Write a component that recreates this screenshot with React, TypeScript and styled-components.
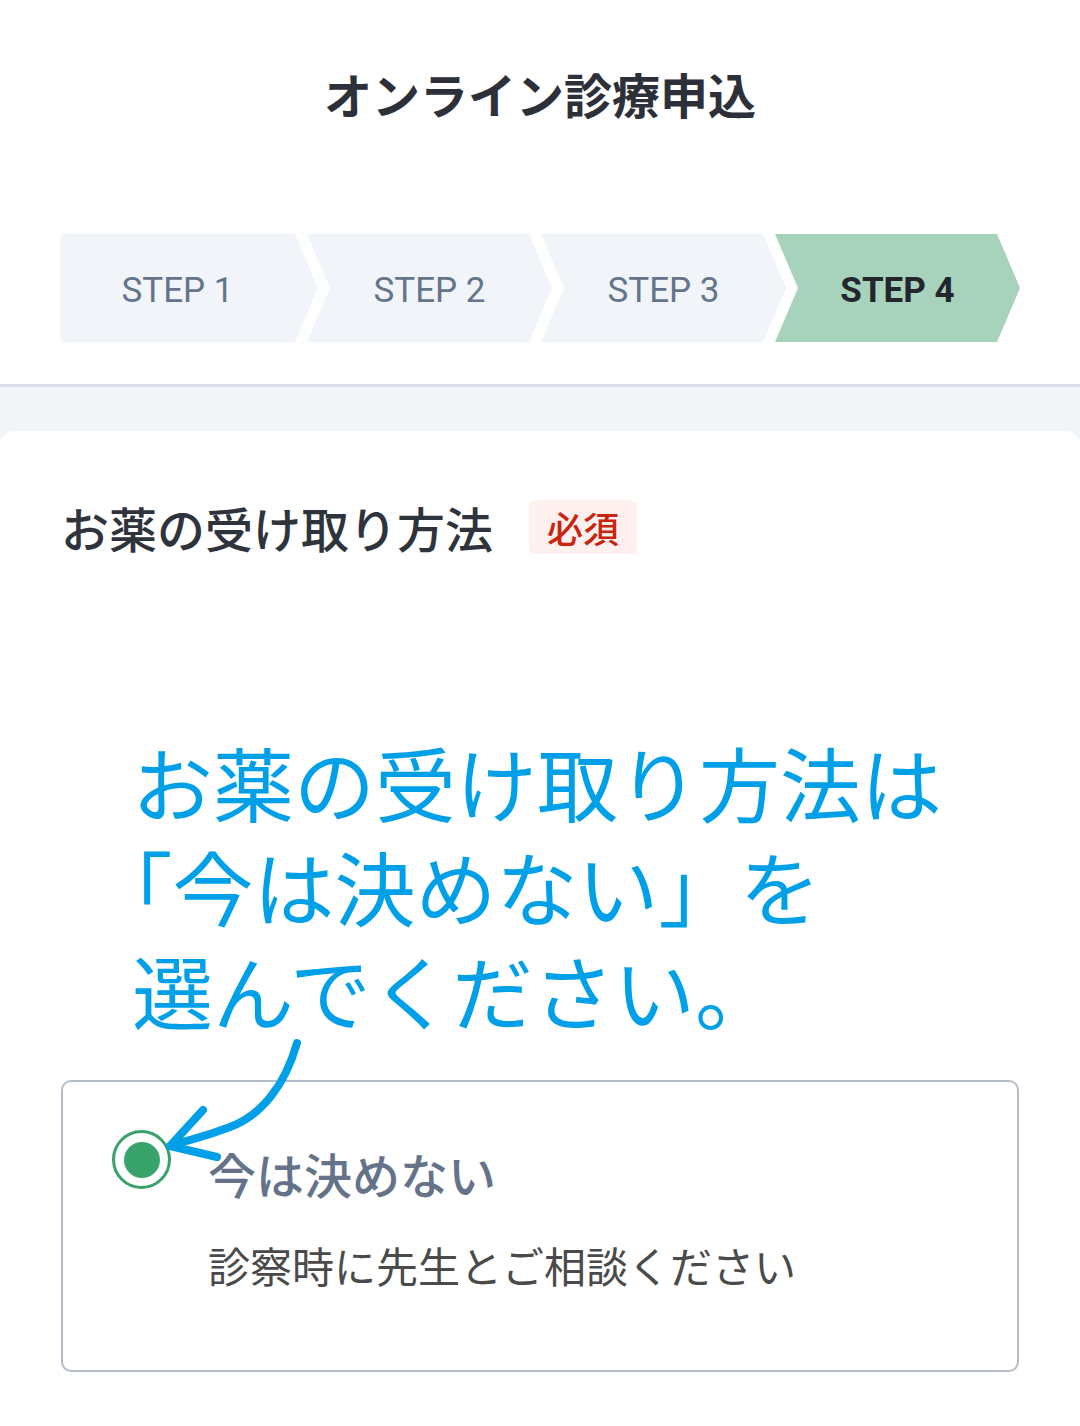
import styled, { createGlobalStyle } from 'styled-components';

const GlobalStyle = createGlobalStyle`
	html, body {
		margin: 0;
		padding: 0;
		background: #f2f5f8;
	}

	body {
		font-family: 'Noto Sans CJK JP', 'Noto Sans', sans-serif;
	}

	* {
		box-sizing: border-box;
	}
`;

const steps = ['STEP 1', 'STEP 2', 'STEP 3', 'STEP 4'];
const currentStep = 3;

const App = () => {
	return (
		<Page>
			<GlobalStyle />
			<Header>
				<Title>オンライン診療申込</Title>
				<Stepper>
					{steps.map((label, i) => (
						<Step key={label} $first={i === 0} $active={i === currentStep}>
							{label}
						</Step>
					))}
				</Stepper>
			</Header>

			<Card>
				<HeadingRow>
					<Heading>お薬の受け取り方法</Heading>
					<RequiredBadge>必須</RequiredBadge>
				</HeadingRow>

				<Annotation>
					<AnnotationLine>お薬の受け取り方法は</AnnotationLine>
					<AnnotationLine>
						<OpenBracket>「</OpenBracket>今は決めない」を
					</AnnotationLine>
					<AnnotationLine>選んでください。</AnnotationLine>
				</Annotation>

				<OptionWrap>
					<ArrowSvg viewBox="0 0 150 130" width={150} height={130}>
						<path
							d="M136 8 C124 50, 101 80, 69 92 S34 103, 9 111"
							fill="none"
							stroke="#00a0e9"
							strokeWidth={8}
							strokeLinecap="round"
							strokeLinejoin="round"
						/>
						<path
							d="M42 75 L9 111 L56 122"
							fill="none"
							stroke="#00a0e9"
							strokeWidth={8}
							strokeLinecap="round"
							strokeLinejoin="round"
						/>
					</ArrowSvg>
					<OptionCard>
						<Radio>
							<RadioDot />
						</Radio>
						<OptionText>
							<OptionLabel>今は決めない</OptionLabel>
							<OptionDescription>診察時に先生とご相談ください</OptionDescription>
						</OptionText>
					</OptionCard>
				</OptionWrap>
			</Card>
		</Page>
	);
};

const Page = styled.div`
	display: flex;
	flex-direction: column;
	min-height: 100vh;
`;

const Header = styled.header`
	background: #fff;
	padding: 64px 0 42px;

	border-bottom: 3px solid #dbe1e8;
`;

const Title = styled.h1`
	margin: 0;

	text-align: center;
	font-size: 48px;
	line-height: 58px;
	font-weight: 700;
	color: #2d3038;
`;

const Stepper = styled.div`
	display: flex;
	padding: 0 60px;
	margin-top: 112px;
`;

const Step = styled.div<{ $first: boolean; $active: boolean }>`
	display: flex;
	align-items: center;
	justify-content: center;

	height: 108px;
	width: ${(p) => (p.$first ? '258px' : '245px')};
	margin-left: ${(p) => (p.$first ? '0' : '-11px')};
	padding-top: 5px;
	padding-right: ${(p) => (p.$first ? '23px' : '0')};

	font-family: Roboto, 'Liberation Sans', sans-serif;
	font-size: 35px;
	font-weight: ${(p) => (p.$active ? 700 : 400)};
	color: ${(p) => (p.$active ? '#23272d' : '#64748b')};
	background: ${(p) => (p.$active ? '#a7d2bc' : '#f1f5f9')};

	border-radius: ${(p) => (p.$first ? '6px 0 0 6px' : '0')};
	clip-path: ${(p) =>
		p.$first
			? 'polygon(0 0, calc(100% - 23px) 0, 100% 50%, calc(100% - 23px) 100%, 0 100%)'
			: 'polygon(0 0, calc(100% - 23px) 0, 100% 50%, calc(100% - 23px) 100%, 0 100%, 23px 50%)'};
`;

const Card = styled.main`
	flex: 1;

	margin-top: 44px;
	padding: 69px 60px 0 61px;

	background: #fff;
	border-radius: 14px 14px 0 0;
`;

const HeadingRow = styled.div`
	display: flex;
	align-items: center;
	gap: 36px;
`;

const Heading = styled.h2`
	margin: 0;

	font-size: 48px;
	line-height: 54px;
	font-weight: 500;
	color: #2f333b;
`;

const RequiredBadge = styled.span`
	display: inline-flex;
	align-items: center;

	height: 54px;
	padding: 0 18px;

	font-size: 36px;
	font-weight: 500;
	color: #c9240e;
	background: #fdf0ee;
	border-radius: 6px;
`;

const Annotation = styled.div`
	margin-top: 175px;
	padding-left: 71px;

	font-size: 81px;
	line-height: 104px;
	font-weight: 400;
	color: #00a0e9;
`;

const AnnotationLine = styled.div`
	white-space: nowrap;
`;

const OpenBracket = styled.span`
	margin-left: -0.5em;
`;

const OptionWrap = styled.div`
	position: relative;
	margin-top: 39px;
	width: 958px;
`;

const ArrowSvg = styled.svg`
	position: absolute;
	left: 100px;
	top: -45px;
	z-index: 2;
	overflow: visible;
`;

const OptionCard = styled.label`
	display: flex;
	align-items: flex-start;

	height: 292px;
	padding: 48px 50px 0 49px;

	border: 2px solid #b4bcc8;
	border-radius: 10px;
`;

const Radio = styled.span`
	display: flex;
	align-items: center;
	justify-content: center;
	flex-shrink: 0;

	width: 59px;
	height: 59px;

	border: 3px solid #38a169;
	border-radius: 50%;
`;

const RadioDot = styled.span`
	width: 36px;
	height: 36px;

	background: #38a36b;
	border-radius: 50%;
`;

const OptionText = styled.div`
	display: flex;
	flex-direction: column;

	margin-left: 37px;
	padding-top: 14px;
`;

const OptionLabel = styled.span`
	font-size: 48px;
	line-height: 58px;
	font-weight: 500;
	color: #65738a;
`;

const OptionDescription = styled.span`
	margin-top: 34px;

	font-size: 42px;
	line-height: 58px;
	font-weight: 400;
	color: #4a4a4a;
`;

export default App;
